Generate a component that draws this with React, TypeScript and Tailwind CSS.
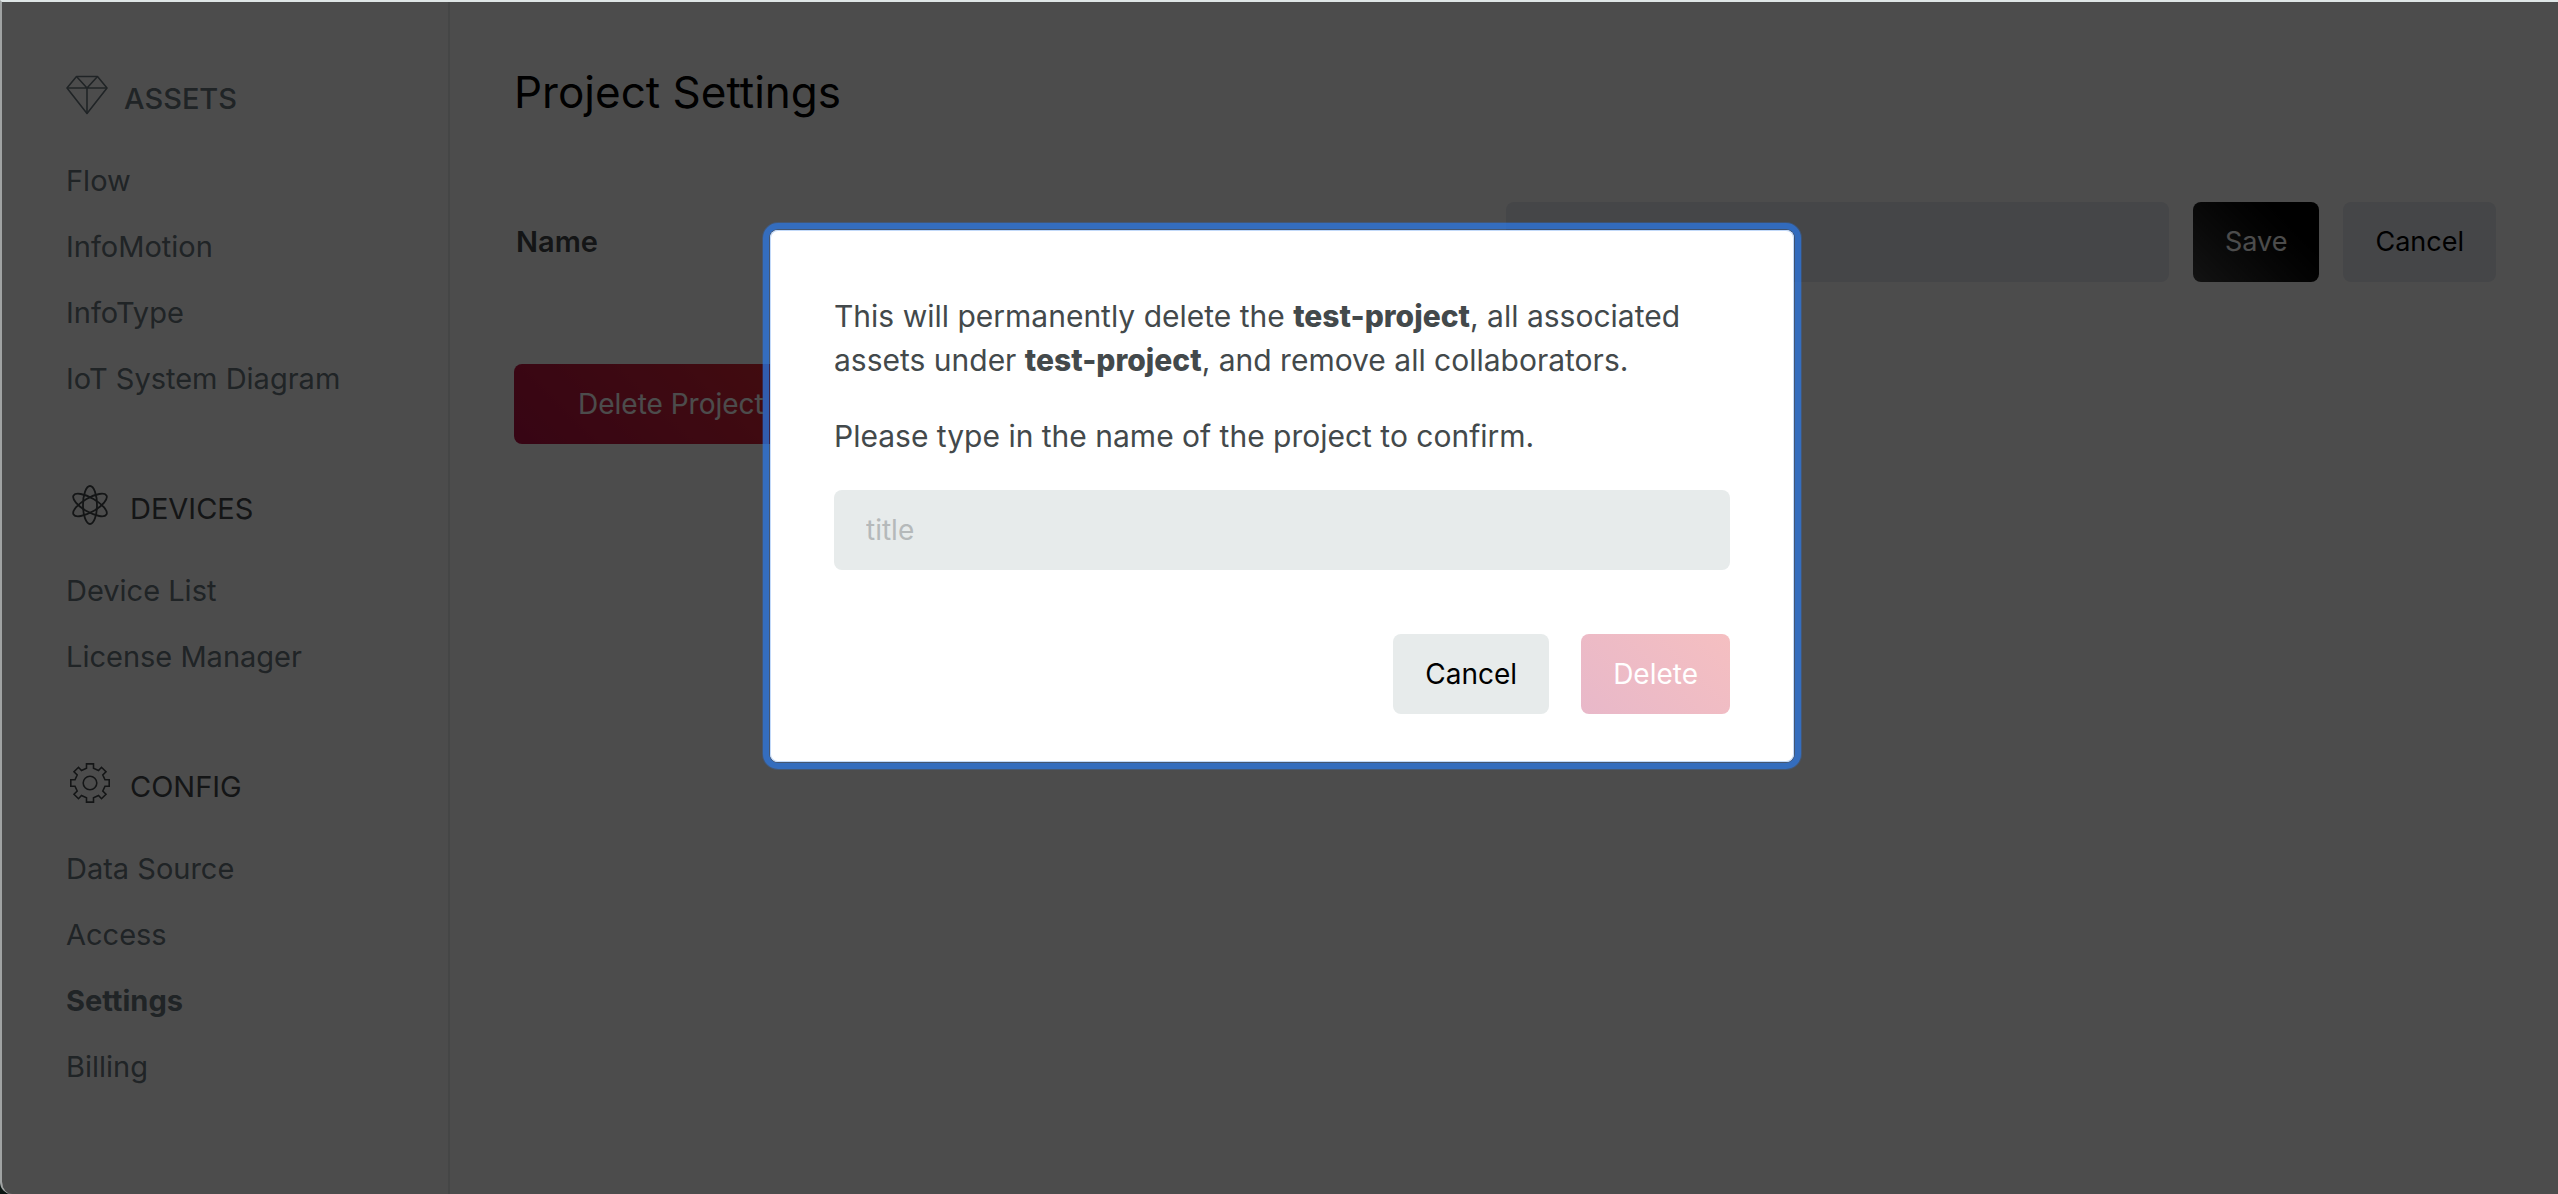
import React, { useState } from "react";

const iconProps = {
  fill: "none",
  stroke: "currentColor",
  "aria-hidden": true,
} as const;

function DiamondIcon() {
  return (
    <svg {...iconProps} width="42" height="40" viewBox="0 0 42 40" strokeWidth="1.6" strokeLinejoin="round">
      <path d="M10.5 1.5H31.5L41 13L21 38.5L1 13Z" />
      <path d="M1 13H41M10.5 1.5L21 13L31.5 1.5M21 13V38.5" />
    </svg>
  );
}

function AtomIcon() {
  return (
    <svg {...iconProps} width="48" height="40" viewBox="0 0 48 40" strokeWidth="1.8">
      <ellipse cx="24" cy="20" rx="7" ry="19" />
      <ellipse cx="24" cy="20" rx="7" ry="19" transform="rotate(60 24 20)" />
      <ellipse cx="24" cy="20" rx="7" ry="19" transform="rotate(-60 24 20)" />
    </svg>
  );
}

function GearIcon() {
  return (
    <svg {...iconProps} width="48" height="40" viewBox="0 0 48 40" strokeWidth="1.6">
      <path d="M20.5 0.9H27.5V5.3L32.5 7.5L35.5 4.3L40 8.8L36.8 12L39 16.8H43.2V23.2H39L36.8 28L40 31.2L35.5 35.7L32.5 32.5L27.5 34.7V39.1H20.5V34.7L15.5 32.5L12.5 35.7L8 31.2L11.2 28L9 23.2H4.8V16.8H9L11.2 12L8 8.8L12.5 4.3L15.5 7.5L20.5 5.3Z" />
      <circle cx="24" cy="20" r="6.8" />
    </svg>
  );
}

type Section = {
  title: string;
  icon: React.ReactNode;
  headingClass: string;
  items: string[];
};

const sections: Section[] = [
  {
    title: "ASSETS",
    icon: <DiamondIcon />,
    headingClass: "font-medium text-[#6b787f]",
    items: ["Flow", "InfoMotion", "InfoType", "IoT System Diagram"],
  },
  {
    title: "DEVICES",
    icon: <AtomIcon />,
    headingClass: "text-[#43494b]",
    items: ["Device List", "License Manager"],
  },
  {
    title: "CONFIG",
    icon: <GearIcon />,
    headingClass: "text-[#43494b]",
    items: ["Data Source", "Access", "Settings", "Billing"],
  },
];

function Sidebar() {
  return (
    <nav className="flex w-[448px] shrink-0 flex-col gap-16 border-r-2 border-[#e7ebeb] px-16 pt-16" aria-label="Project">
      {sections.map((s) => (
        <section key={s.title}>
          <h2 className={`mb-6 flex h-[58px] items-center gap-4 text-[29px] ${s.headingClass}`}>
            {s.icon}
            <span className="pt-2">{s.title}</span>
          </h2>
          <ul>
            {s.items.map((item) => (
              <li key={item} className="h-[66px] text-[29px] leading-[66px] text-[#6b787f]">
                <a href="#" className={item === "Settings" ? "font-bold" : ""}>
                  {item}
                </a>
              </li>
            ))}
          </ul>
        </section>
      ))}
    </nav>
  );
}

const button = "h-20 rounded-lg px-8";

function Settings() {
  return (
    <main className="min-w-0 flex-1 pt-[62px] pr-[62px] pl-16">
      <h1 className="text-[44px] leading-[56px] text-black">Project Settings</h1>
      <form className="mt-[82px] flex items-center" onSubmit={(e) => e.preventDefault()}>
        <label htmlFor="name" className="flex-1 pl-0.5 text-[29px] font-semibold text-[#43494b]">
          Name
        </label>
        <div className="flex flex-1 gap-6">
          <input id="name" className="h-20 min-w-0 flex-1 rounded-lg bg-[#e6e9f0] px-8 text-[28px]" />
          <button className={`${button} bg-linear-45 from-[#404040] to-black text-[27px] text-white`}>Save</button>
          <button type="button" className={`${button} bg-[#e6e9f0] text-[27px] text-black`}>
            Cancel
          </button>
        </div>
      </form>
      <button className="mt-[82px] h-20 rounded-lg bg-linear-45 from-[#b81144] to-[#e12a30] px-16 text-[28px] text-white">
        Delete Project
      </button>
    </main>
  );
}

function DeleteDialog() {
  const [title, setTitle] = useState("");
  return (
    <div className="absolute inset-0 flex items-start justify-center bg-black/70 pt-[228px] pl-1">
      <div
        role="dialog"
        aria-modal="true"
        aria-label="Delete project"
        className="w-[1024px] rounded-lg bg-white px-16 pt-16 pb-12 text-[30px] leading-[44px] text-[#43494b] shadow-[0_0_0_8px_rgba(45,121,230,0.25),inset_0_0_0_1px_#c3dafa] outline-[6px] outline-offset-1 outline-[rgba(45,121,230,0.65)] outline-solid"
      >
        <p>
          This will permanently delete the <strong className="font-extrabold">test-project</strong>, all associated
          assets under <strong className="font-extrabold">test-project</strong>, and remove all collaborators.
        </p>
        <label htmlFor="confirm" className="mt-8 block">
          Please type in the name of the project to confirm.
        </label>
        <input
          id="confirm"
          placeholder="title"
          value={title}
          onChange={(e) => setTitle(e.target.value)}
          className="mt-8 block h-20 w-full rounded-lg bg-[#e7ebeb] px-8 text-[28px] placeholder:text-[#b5b9ba]"
        />
        <div className="mt-16 flex justify-end gap-8">
          <button className={`${button} bg-[#e7ebeb] text-[28px] text-black`}>Cancel</button>
          <button className={`${button} bg-linear-45 from-[#e8b8c9] to-[#f5bfc1] text-[28px] text-white`}>
            Delete
          </button>
        </div>
      </div>
    </div>
  );
}

export default function App() {
  return (
    <div className="bg-[#0b1512] font-[Inter,sans-serif]">
      <div className="relative flex min-h-screen overflow-hidden rounded-bl-xl border-t-2 border-l-2 border-t-[#dfe6e6] border-l-[#a0a3a3] bg-white">
        <Sidebar />
        <Settings />
        <DeleteDialog />
      </div>
    </div>
  );
}
